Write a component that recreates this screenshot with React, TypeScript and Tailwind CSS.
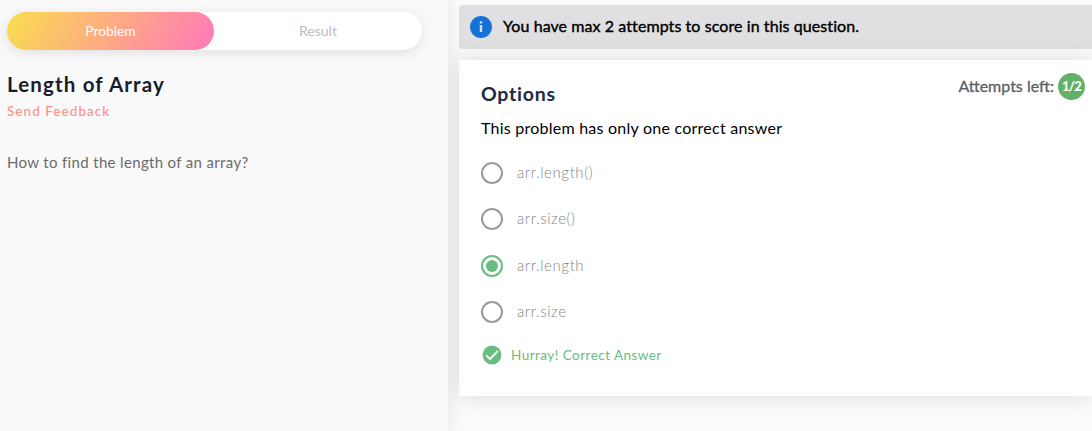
const options = [
  { label: 'arr.length()', selected: false },
  { label: 'arr.size()', selected: false },
  { label: 'arr.length', selected: true },
  { label: 'arr.size', selected: false },
];

function Radio({ selected }: { selected: boolean }) {
  return (
    <span
      className={
        selected
          ? 'flex size-[22px] shrink-0 items-center justify-center rounded-full border-2 border-[#6abd80]'
          : 'flex size-[22px] shrink-0 items-center justify-center rounded-full border-2 border-[#9b9b9b]'
      }
    >
      {selected && <span className="size-3 rounded-full bg-[#6abd80]" />}
    </span>
  );
}

function ProblemPanel() {
  return (
    <section className="z-10 w-[448px] shrink-0 bg-[#f9f9f9] pl-[7px] pt-3 shadow-[0_0_20px_rgba(0,0,0,0.1)]">
      <div className="flex h-[38px] w-[415px] rounded-full bg-white text-[14px] leading-[38px] shadow-[0_3px_12px_rgba(0,0,0,0.1)]">
        <button className="w-[207px] rounded-full bg-linear-[120deg,#fada52_3%,#ff7eb3_94%] text-[13.8px] text-white">
          Problem
        </button>
        <button className="w-[208px] text-[#bdbdbd]">Result</button>
      </div>
      <h1 className="mt-[21px] text-[20.5px] leading-[26px] font-bold tracking-[1.15px] text-[#161c2d]">
        Length of Array
      </h1>
      <a className="mt-1 block text-[13.5px] leading-5 font-medium tracking-[1.05px] text-[#ff8f8f]">Send Feedback</a>
      <p className="mt-[31px] text-[15px] leading-5 tracking-[0.34px] text-[#6b6b6b]">
        How to find the length of an array?
      </p>
    </section>
  );
}

export default function App() {
  return (
    <main className="flex h-[431px] w-full overflow-hidden bg-[#fbfbfb] font-['Lato',sans-serif]">
      <ProblemPanel />
      <section className="min-w-0 flex-1 pl-[11px] pt-[5px]">
        <div className="flex h-11 items-center rounded-l bg-[#e0e0e2] pl-[11px]">
          <svg className="size-[22px]" viewBox="0 0 22 22">
            <circle cx="11" cy="11" r="11" fill="#1572d8" />
            <path d="M9.8 5.3h2.4v2.2H9.8zM9.8 9h2.4v7H9.8z" fill="#d9dce5" />
          </svg>
          <span className="ml-[11px] pb-[2px] text-[16px] leading-5 font-normal tracking-[0.08px] text-black [-webkit-text-stroke:0.4px_black]">
            You have max 2 attempts to score in this question.
          </span>
        </div>
        <div className="mt-[11px] h-[336px] bg-white pl-[22px] shadow-[0_0_22px_rgba(0,0,0,0.13)]">
          <div className="flex h-[58px] justify-between">
            <h2 className="mt-[21px] text-[19.5px] leading-[26px] font-bold tracking-[0.75px] text-[#202945]">Options</h2>
            <div className="mt-[13px] mr-[7px] flex h-[27px] items-center text-[16px] text-[#5c5e68]">
              <span className="pb-[2px] [-webkit-text-stroke:0.3px_#5c5e68]">Attempts left:</span>
              <span className="ml-1 flex size-[27px] items-center justify-center rounded-full bg-[#63b168] text-[13px] font-black tracking-[-0.8px] text-white">
                1/2
              </span>
            </div>
          </div>
          <p className="text-[16px] leading-5 tracking-[0.24px] text-black">This problem has only one correct answer</p>
          <div className="mt-6 flex h-[161px] flex-col justify-between">
            {options.map((option) => (
              <label key={option.label} className="flex items-center">
                <Radio selected={option.selected} />
                <span className="ml-[14px] pb-px text-[15px] leading-[21px] font-light tracking-[0.6px] text-[#858585]">
                  {option.label}
                </span>
              </label>
            ))}
          </div>
          <div className="mt-[22px] flex h-5 items-center">
            <svg className="ml-[1px] size-5" viewBox="0 0 20 20">
              <circle cx="10" cy="10" r="9.4" fill="#6abd80" />
              <path d="M4.3 10.4l3.7 3.7 7.9-8.2" fill="none" stroke="#fff" strokeWidth="1.9" />
            </svg>
            <span className="ml-[9px] pb-px text-[13.5px] leading-5 tracking-[0.46px] text-[#6abd80]">
              Hurray! Correct Answer
            </span>
          </div>
        </div>
      </section>
    </main>
  );
}
